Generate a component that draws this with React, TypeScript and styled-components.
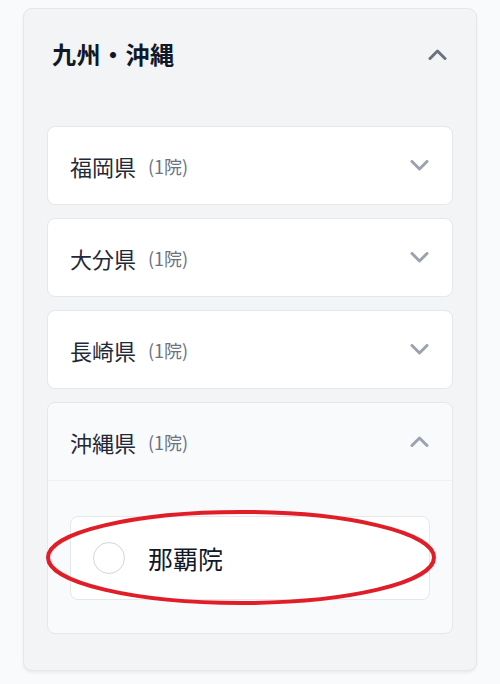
import styled, { createGlobalStyle } from 'styled-components';

const GlobalStyle = createGlobalStyle`
  body {
    margin: 0;
    background: #f9fafb;
    font-family: "Noto Sans CJK JP", "Noto Sans", sans-serif;
    color: #1f2937;
  }
`;

const Page = styled.div`
  padding: 8px 23px 14px 23px;
`;

const Panel = styled.section`
  background: #f3f4f6;
  border: 1px solid #e5e7eb;
  border-radius: 9px;
  box-shadow: 0 2px 3px rgba(0, 0, 0, 0.06);
  padding: 0 23px 36px 23px;
`;

const PanelHeader = styled.div`
  display: flex;
  align-items: center;
  justify-content: space-between;
  height: 90px;
  padding: 0 6px 2px 5px;
  line-height: 1;
`;

const PanelTitle = styled.h2`
  margin: 0;
  font-size: 24px;
  font-weight: 700;
  color: #111827;
  letter-spacing: 0.5px;
`;

const List = styled.div`
  display: flex;
  flex-direction: column;
  gap: 13px;
  margin-top: 25px;
`;

const Card = styled.div<{ $open?: boolean }>`
  background: ${p => (p.$open ? '#f9fafb' : '#ffffff')};
  border: 1px solid #e5e7eb;
  border-radius: 8px;
`;

const CardHeader = styled.div<{ $open?: boolean }>`
  display: flex;
  align-items: center;
  justify-content: space-between;
  height: 77px;
  padding: 0 23px 0 22px;
  line-height: 1;
  border-bottom: ${p => (p.$open ? '1px solid #eef0f2' : 'none')};
`;

const Label = styled.div`
  display: flex;
  align-items: center;
`;

const Pref = styled.span`
  font-size: 22px;
  color: #1f2937;
`;

const Count = styled.span`
  font-size: 18px;
  color: #6b7280;
  margin-left: 12px;
`;

const CardBody = styled.div`
  padding: 35px 22px 33px 22px;
`;

const Clinic = styled.label`
  position: relative;
  display: flex;
  align-items: center;
  gap: 23px;
  height: 82px;
  padding: 0 22px;
  background: #ffffff;
  border: 1px solid #e5e7eb;
  border-radius: 8px;
  line-height: 1;
`;

const Radio = styled.span`
  width: 30px;
  height: 30px;
  border-radius: 50%;
  border: 1.5px solid #d1d5db;
  background: #fff;
  flex-shrink: 0;
`;

const ClinicName = styled.span`
  font-size: 25px;
  color: #111827;
`;

const Mark = styled.svg`
  position: absolute;
  left: -25px;
  top: -7px;
  overflow: visible;
  pointer-events: none;
`;

const Chevron = ({ up, color }: { up?: boolean; color: string }) => (
  <svg width={19} height={11} viewBox="0 0 19 11" fill="none">
    <path
      d={up ? 'M2 9.5 L9.5 2 L17 9.5' : 'M2 1.5 L9.5 9 L17 1.5'}
      stroke={color}
      strokeWidth={3}
      strokeLinecap="round"
      strokeLinejoin="round"
    />
  </svg>
);

const prefs = ['福岡県', '大分県', '長崎県'];

export default function App() {
  return (
    <>
      <GlobalStyle />
      <Page>
        <Panel>
          <PanelHeader>
            <PanelTitle>九州・沖縄</PanelTitle>
            <Chevron up color="#6b7280" />
          </PanelHeader>
          <List>
            {prefs.map(p => (
              <Card key={p}>
                <CardHeader>
                  <Label>
                    <Pref>{p}</Pref>
                    <Count>(1院)</Count>
                  </Label>
                  <Chevron color="#9ca3af" />
                </CardHeader>
              </Card>
            ))}
            <Card $open>
              <CardHeader $open>
                <Label>
                  <Pref>沖縄県</Pref>
                  <Count>(1院)</Count>
                </Label>
                <Chevron up color="#9ca3af" />
              </CardHeader>
              <CardBody>
                <Clinic>
                  <Radio />
                  <ClinicName>那覇院</ClinicName>
                  <Mark width={390} height={95} viewBox="0 0 390 95">
                    <ellipse cx={195} cy={47.5} rx={193} ry={45.5} stroke="#e11d27" strokeWidth={4} fill="none" />
                  </Mark>
                </Clinic>
              </CardBody>
            </Card>
          </List>
        </Panel>
      </Page>
    </>
  );
}
